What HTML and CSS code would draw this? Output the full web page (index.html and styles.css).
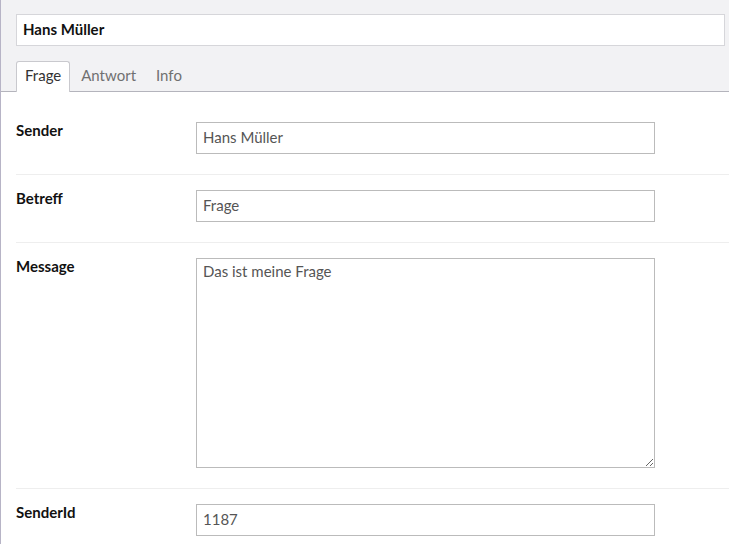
FILE: index.html
```html
<!DOCTYPE html>
<html lang="de">
<head>
<meta charset="utf-8">
<title>Hans Müller</title>
<link rel="stylesheet" href="styles.css">
</head>
<body>
<div class="page">
  <header class="head">
    <input class="title-input" type="text" value="Hans Müller">
    <nav class="tabs">
      <span class="tab active">Frage</span>
      <span class="tab">Antwort</span>
      <span class="tab">Info</span>
    </nav>
  </header>
  <main class="content">
    <div class="row">
      <label class="label">Sender</label>
      <input class="field" type="text" value="Hans Müller">
    </div>
    <div class="row">
      <label class="label">Betreff</label>
      <input class="field" type="text" value="Frage">
    </div>
    <div class="row">
      <label class="label">Message</label>
      <textarea class="field area">Das ist meine Frage</textarea>
    </div>
    <div class="row">
      <label class="label">SenderId</label>
      <input class="field" type="text" value="1187">
    </div>
  </main>
</div>
</body>
</html>
```
FILE: styles.css
```css
html, body {
  margin: 0;
  padding: 0;
  background: #ffffff;
}
body {
  font-family: Lato, "Open Sans", sans-serif;
  font-size: 15px;
  line-height: 20px;
  color: #111;
}
.page {
  border-left: 1px solid #b7b4c6;
  min-height: 544px;
  box-sizing: border-box;
  width: 729px;
  overflow: hidden;
}
.head {
  background: #f2f2f4;
  padding: 14px 4px 0 15px;
  border-bottom: 1px solid #b4b4bc;
  display: flex;
  flex-direction: column;
}
.title-input {
  box-sizing: border-box;
  height: 32px;
  width: 100%;
  margin: 0;
  border: 1px solid #d6d6da;
  background: #fff;
  padding: 0 6px 3px;
  font-family: Lato, sans-serif;
  font-size: 15px;
  font-weight: 700;
  color: #111;
  outline: none;
}
.tabs {
  display: flex;
  gap: 2px;
  margin-top: 15px;
  margin-bottom: -1px;
}
.tab {
  display: block;
  padding: 3px 8px 7px;
  border: 1px solid transparent;
  border-bottom: none;
  border-radius: 3px 3px 0 0;
  color: #707070;
  line-height: 20px;
}
.tab.active {
  background: #fff;
  border-color: #c9c9ce;
  color: #333;
}
.content {
  padding: 15px 0 0 15px;
}
.row {
  display: flex;
  align-items: flex-start;
  padding: 15px 0 20px;
  border-bottom: 1px solid #eeeeee;
}
.label {
  width: 180px;
  flex: none;
  font-weight: 700;
  color: #111;
  margin-top: -2px;
}
.field {
  box-sizing: border-box;
  width: 459px;
  height: 32px;
  margin: 0;
  border: 1px solid #bbbbbb;
  border-radius: 0;
  background: #fff;
  padding: 0 6px 3px;
  font-family: Lato, sans-serif;
  font-size: 15px;
  line-height: 20px;
  color: #555;
  outline: none;
}
.area {
  height: 210px;
  padding: 2px 6px;
  resize: vertical;
  display: block;
}
```
